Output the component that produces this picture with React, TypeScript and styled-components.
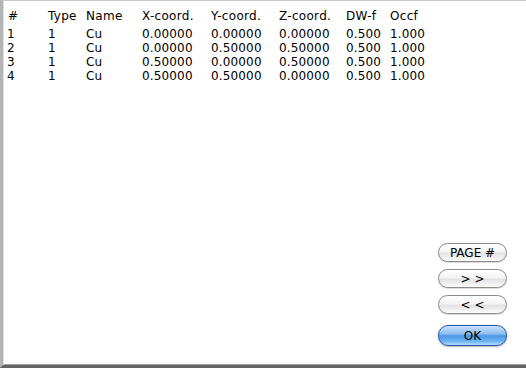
import React from "react";
import styled, { createGlobalStyle, css } from "styled-components";

const Global = createGlobalStyle`
  html, body { margin: 0; padding: 0; background: #ffffff; }
  body { font-family: "DejaVu Sans", "Liberation Sans", sans-serif; }
`;

const Frame = styled.div`
  box-sizing: border-box;
  width: 526px;
  height: 368px;
  display: flex;
  flex-direction: column;
  background: #ffffff;
  border-top: 1px solid #c8c8c8;
  border-left: 3px solid #b4b4b4;
  border-bottom: 3px solid #646464;
  box-shadow: inset 1px 0 0 #dedede, inset 0 -1px 0 #a0a0a0;
`;

const Table = styled.div`
  display: grid;
  grid-template-columns: 41px 38px 56px 69px 68px 67px 44px 60px;
  grid-template-rows: 18px repeat(4, 14px);
  padding: 8px 0 0 4px;
  font-size: 12px;
  color: #000;
  white-space: nowrap;
`;

const HeaderCell = styled.div<{ $shift?: number }>`
  line-height: 14px;
  letter-spacing: 0.3px;
  margin-left: ${(p) => p.$shift ?? 0}px;
`;

const Cell = styled.div`
  line-height: 14px;
  letter-spacing: 0.15px;
`;

const Spacer = styled.div`
  flex: 1;
`;

const ButtonColumn = styled.div`
  display: flex;
  flex-direction: column;
  align-items: flex-end;
  padding: 0 19px 19px 0;
  gap: 7px;
`;

const Button = styled.button<{ $primary?: boolean; $gapTop?: number }>`
  box-sizing: border-box;
  width: 69px;
  height: 19px;
  border-radius: 10px;
  font-family: "DejaVu Sans", "Liberation Sans", sans-serif;
  font-size: 12px;
  line-height: 16px;
  padding: 0;
  color: #000;
  margin-top: ${(p) => p.$gapTop ?? 0}px;
  border: 1px solid #8a8a8a;
  background: linear-gradient(
    to bottom,
    #ffffff 0%,
    #f4f4f4 45%,
    #e2e2e2 55%,
    #f2f2f2 85%,
    #ffffff 100%
  );
  box-shadow: 0 1px 1px rgba(0, 0, 0, 0.15);
  ${(p) =>
    p.$primary &&
    css`
      height: 21px;
      border-color: #2a57a8;
      background: linear-gradient(
        to bottom,
        #c9e2fb 0%,
        #8fc0f2 40%,
        #4d97e8 52%,
        #6cb3f4 80%,
        #b5dcff 100%
      );
      box-shadow: 0 1px 2px rgba(0, 0, 0, 0.3);
    `}
`;

const headers = ["#", "Type", "Name", "X-coord.", "Y-coord.", "Z-coord.", "DW-f", "Occf"];

const rows = [
  ["1", "1", "Cu", "0.00000", "0.00000", "0.00000", "0.500", "1.000"],
  ["2", "1", "Cu", "0.00000", "0.50000", "0.50000", "0.500", "1.000"],
  ["3", "1", "Cu", "0.50000", "0.00000", "0.50000", "0.500", "1.000"],
  ["4", "1", "Cu", "0.50000", "0.50000", "0.00000", "0.500", "1.000"],
];

export default function App() {
  return (
    <>
      <Global />
      <Frame>
        <Table>
          {headers.map((h, i) => (
            <HeaderCell key={h} $shift={i === 0 ? 1 : 0}>
              {h}
            </HeaderCell>
          ))}
          {rows.map((r, ri) =>
            r.map((c, ci) => <Cell key={`${ri}-${ci}`}>{c}</Cell>)
          )}
        </Table>
        <Spacer />
        <ButtonColumn>
          <Button>PAGE #</Button>
          <Button>&gt; &gt;</Button>
          <Button>&lt; &lt;</Button>
          <Button $primary $gapTop={4}>
            OK
          </Button>
        </ButtonColumn>
      </Frame>
    </>
  );
}
